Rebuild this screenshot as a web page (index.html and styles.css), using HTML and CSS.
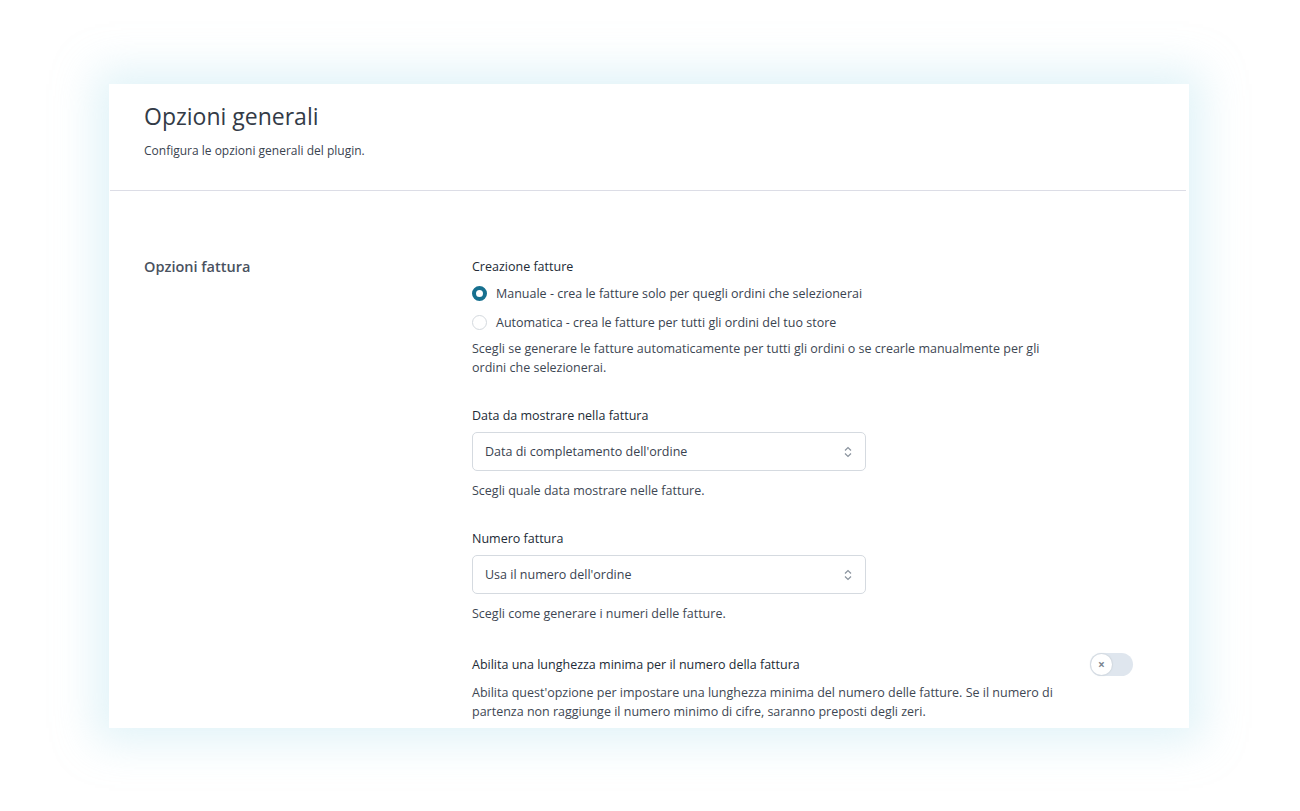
FILE: index.html
```html
<!DOCTYPE html>
<html lang="it">
<head>
    <meta charset="UTF-8">
    <meta name="viewport" content="width=device-width, initial-scale=1.0">
    <title>Opzioni generali</title>
    <link rel="stylesheet" href="styles.css">
</head>
<body>
    <main class="card">
        <header class="card-head">
            <h1>Opzioni generali</h1>
            <p>Configura le opzioni generali del plugin.</p>
        </header>

        <section class="section">
            <h2 class="section-title">Opzioni fattura</h2>
            <div class="fields">
                <div class="field">
                    <div class="label">Creazione fatture</div>
                    <label class="radio">
                        <span class="dot checked"></span>
                        Manuale - crea le fatture solo per quegli ordini che selezionerai
                    </label>
                    <label class="radio">
                        <span class="dot"></span>
                        Automatica - crea le fatture per tutti gli ordini del tuo store
                    </label>
                    <p class="help">Scegli se generare le fatture automaticamente per tutti gli ordini o se crearle manualmente per gli ordini che selezionerai.</p>
                </div>

                <div class="field">
                    <div class="label">Data da mostrare nella fattura</div>
                    <div class="select">
                        <span>Data di completamento dell'ordine</span>
                        <svg width="10" height="14" viewBox="0 0 10 14"><path d="M2 5.5 5 2.5 8 5.5M2 8.5 5 11.5 8 8.5" fill="none" stroke="#8a939e" stroke-width="1.2"/></svg>
                    </div>
                    <p class="help">Scegli quale data mostrare nelle fatture.</p>
                </div>

                <div class="field">
                    <div class="label">Numero fattura</div>
                    <div class="select">
                        <span>Usa il numero dell'ordine</span>
                        <svg width="10" height="14" viewBox="0 0 10 14"><path d="M2 5.5 5 2.5 8 5.5M2 8.5 5 11.5 8 8.5" fill="none" stroke="#8a939e" stroke-width="1.2"/></svg>
                    </div>
                    <p class="help">Scegli come generare i numeri delle fatture.</p>
                </div>

                <div class="field">
                    <div class="toggle-row">
                        <div class="label">Abilita una lunghezza minima per il numero della fattura</div>
                        <span class="toggle"><span class="knob">&times;</span></span>
                    </div>
                    <p class="help tight">Abilita quest'opzione per impostare una lunghezza minima del numero delle fatture. Se il numero di partenza non raggiunge il numero minimo di cifre, saranno preposti degli zeri.</p>
                </div>
            </div>
        </section>
    </main>
</body>
</html>
```

FILE: styles.css
```css
body{
    margin: 0;
    background: #fff;
    font-family: 'Open Sans', 'Noto Sans', sans-serif;
    color: #2a3340;
    height: 811px;
    overflow: hidden;
}
.card{
    margin: 84px 0 0 109px;
    width: 1080px;
    height: 644px;
    background: #fff;
    box-shadow: 0 0 40px 14px rgba(170, 220, 235, 0.35);
    overflow: hidden;
}
.card-head{
    padding: 16px 34px 0;
    height: 90px;
    border-bottom: 1px solid #dcdde6;
    margin: 0 3px 0 1px;
}
.card-head h1{
    margin: 0;
    font-size: 23px;
    font-weight: 400;
    color: #333b47;
}
.card-head p{
    margin: 10px 0 0;
    font-size: 12px;
    color: #3a4350;
}
.section{
    display: flex;
    padding: 67px 0 0 35px;
}
.section-title{
    width: 328px;
    margin: -1px 0 0;
    font-size: 14.5px;
    font-weight: 600;
    color: #4a5260;
}
.fields{
    width: 662px;
}
.field{
    margin-bottom: 30px;
}
.label{
    font-size: 12.5px;
    color: #222b36;
}
.radio{
    display: flex;
    align-items: center;
    gap: 9px;
    margin-top: 10px;
    font-size: 12.5px;
    color: #3a4350;
}
.radio + .radio{
    margin-top: 12px;
}
.dot{
    width: 15px;
    height: 15px;
    border-radius: 50%;
    border: 1px solid #d4d9de;
    box-sizing: border-box;
}
.dot.checked{
    border: 4.5px solid #17708f;
}
.help{
    margin: 8px 0 0;
    width: 590px;
    font-size: 12.5px;
    line-height: 19px;
    color: #3e4753;
}
.select + .help{
    margin-top: 10px;
}
.help.tight{
    margin-top: 7px;
}
.select{
    display: flex;
    align-items: center;
    justify-content: space-between;
    margin-top: 8px;
    width: 394px;
    height: 39px;
    box-sizing: border-box;
    padding: 0 12px 0 12px;
    border: 1px solid #d5dae0;
    border-radius: 5px;
    font-size: 12.5px;
    color: #3a4350;
}
.toggle-row{
    display: flex;
    align-items: center;
    justify-content: space-between;
}
.toggle{
    display: flex;
    align-items: center;
    width: 43px;
    height: 23px;
    border-radius: 12px;
    background: #dfe6ee;
    margin-right: 1px;
}
.knob{
    width: 21px;
    height: 21px;
    margin-left: 1px;
    border-radius: 50%;
    background: #fff;
    box-shadow: 0 0 1px 1px #d3dae1;
    display: flex;
    align-items: center;
    justify-content: center;
    font-size: 12px;
    font-weight: 700;
    color: #7c8591;
}
```
